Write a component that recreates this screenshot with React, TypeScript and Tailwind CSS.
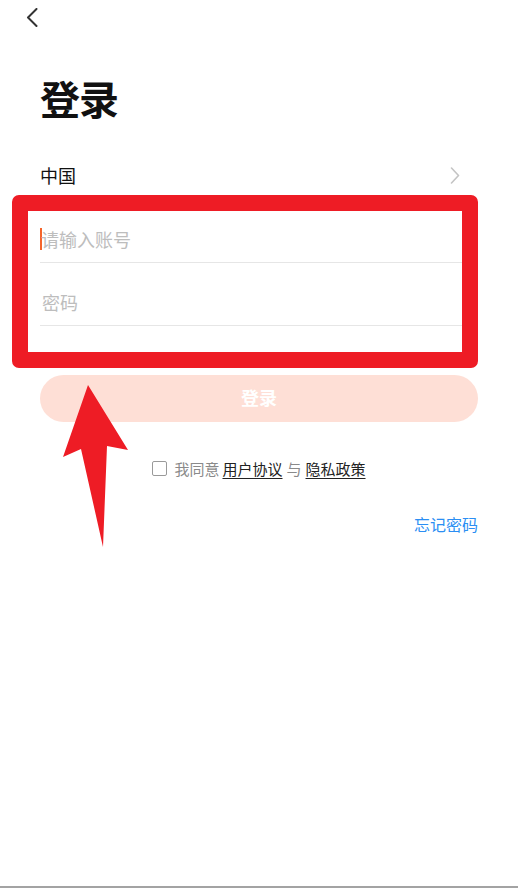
import * as React from 'react';

export default function App() {
  return (
    <div className="relative w-[518px] h-[888px] bg-white border-b-2 border-[#a3a3a3] overflow-hidden font-['Noto_Sans_CJK_SC',sans-serif] text-[#111]">
      {/* Top bar */}
      <div className="h-[36px] pl-[26px] pt-[8px]">
        <svg width="12" height="19" viewBox="0 0 12 19" fill="none">
          <path d="M10.5 1 L2 9.5 L10.5 18" stroke="#333" strokeWidth="2" strokeLinecap="round" strokeLinejoin="round" />
        </svg>
      </div>

      <div className="px-10">
        <h1 className="mt-[42px] text-[40px] font-bold leading-none tracking-[-1px]">登录</h1>

        {/* Region */}
        <div className="mt-[32px] h-[50px] flex items-center justify-between">
          <span className="text-[18px] leading-none">中国</span>
          <svg width="10" height="17" viewBox="0 0 10 17" fill="none" className="mr-[18px]">
            <path d="M1.5 1 L8.5 8.5 L1.5 16" stroke="#c4c4c4" strokeWidth="1.6" strokeLinecap="round" strokeLinejoin="round" />
          </svg>
        </div>

        {/* Inputs */}
        <div className="h-[63px] pt-[15px] flex items-center border-b border-[#e6e6e6]">
          <span className="w-[2px] h-[22px] bg-[#f5642a] -mr-[1px]" />
          <span className="text-[18px] leading-none text-[#bdbdbd]">请输入账号</span>
        </div>
        <div className="h-[63px] pt-[15px] flex items-center border-b border-[#e6e6e6]">
          <span className="pl-[2px] text-[18px] leading-none text-[#bdbdbd]">密码</span>
        </div>

        {/* Submit */}
        <button className="mt-[49px] w-full h-[47px] pb-[3px] rounded-full bg-[#fedfd6] text-white text-[18px] font-bold leading-none">
          登录
        </button>

        {/* Agreement */}
        <div className="mt-[39px] flex items-center justify-center text-[15px] leading-none">
          <span className="w-[15px] h-[15px] border-[1.5px] border-[#9a9a9a] rounded-[2px] mr-[7px]" />
          <span className="text-[#8a8a8a]">我同意</span>
          <span className="ml-[3px] underline underline-offset-[3px] text-[#222]">用户协议</span>
          <span className="mx-[4px] text-[#8a8a8a]">与</span>
          <span className="underline underline-offset-[3px] text-[#222]">隐私政策</span>
        </div>

        <div className="mt-[40px] flex justify-end">
          <span className="text-[16px] leading-none text-[#2b8ef3]">忘记密码</span>
        </div>
      </div>

      {/* Annotation overlay */}
      <div className="absolute left-[12px] top-[195px] w-[466px] h-[173px] border-[16px] border-[#ee1c25] rounded-[7px]" />
      <svg className="absolute left-0 top-0" width="518" height="888" viewBox="0 0 518 888">
        <polygon points="88,385 128,450 107,446 103,547 81,449 63,457" fill="#ee1c25" />
      </svg>
    </div>
  );
}
